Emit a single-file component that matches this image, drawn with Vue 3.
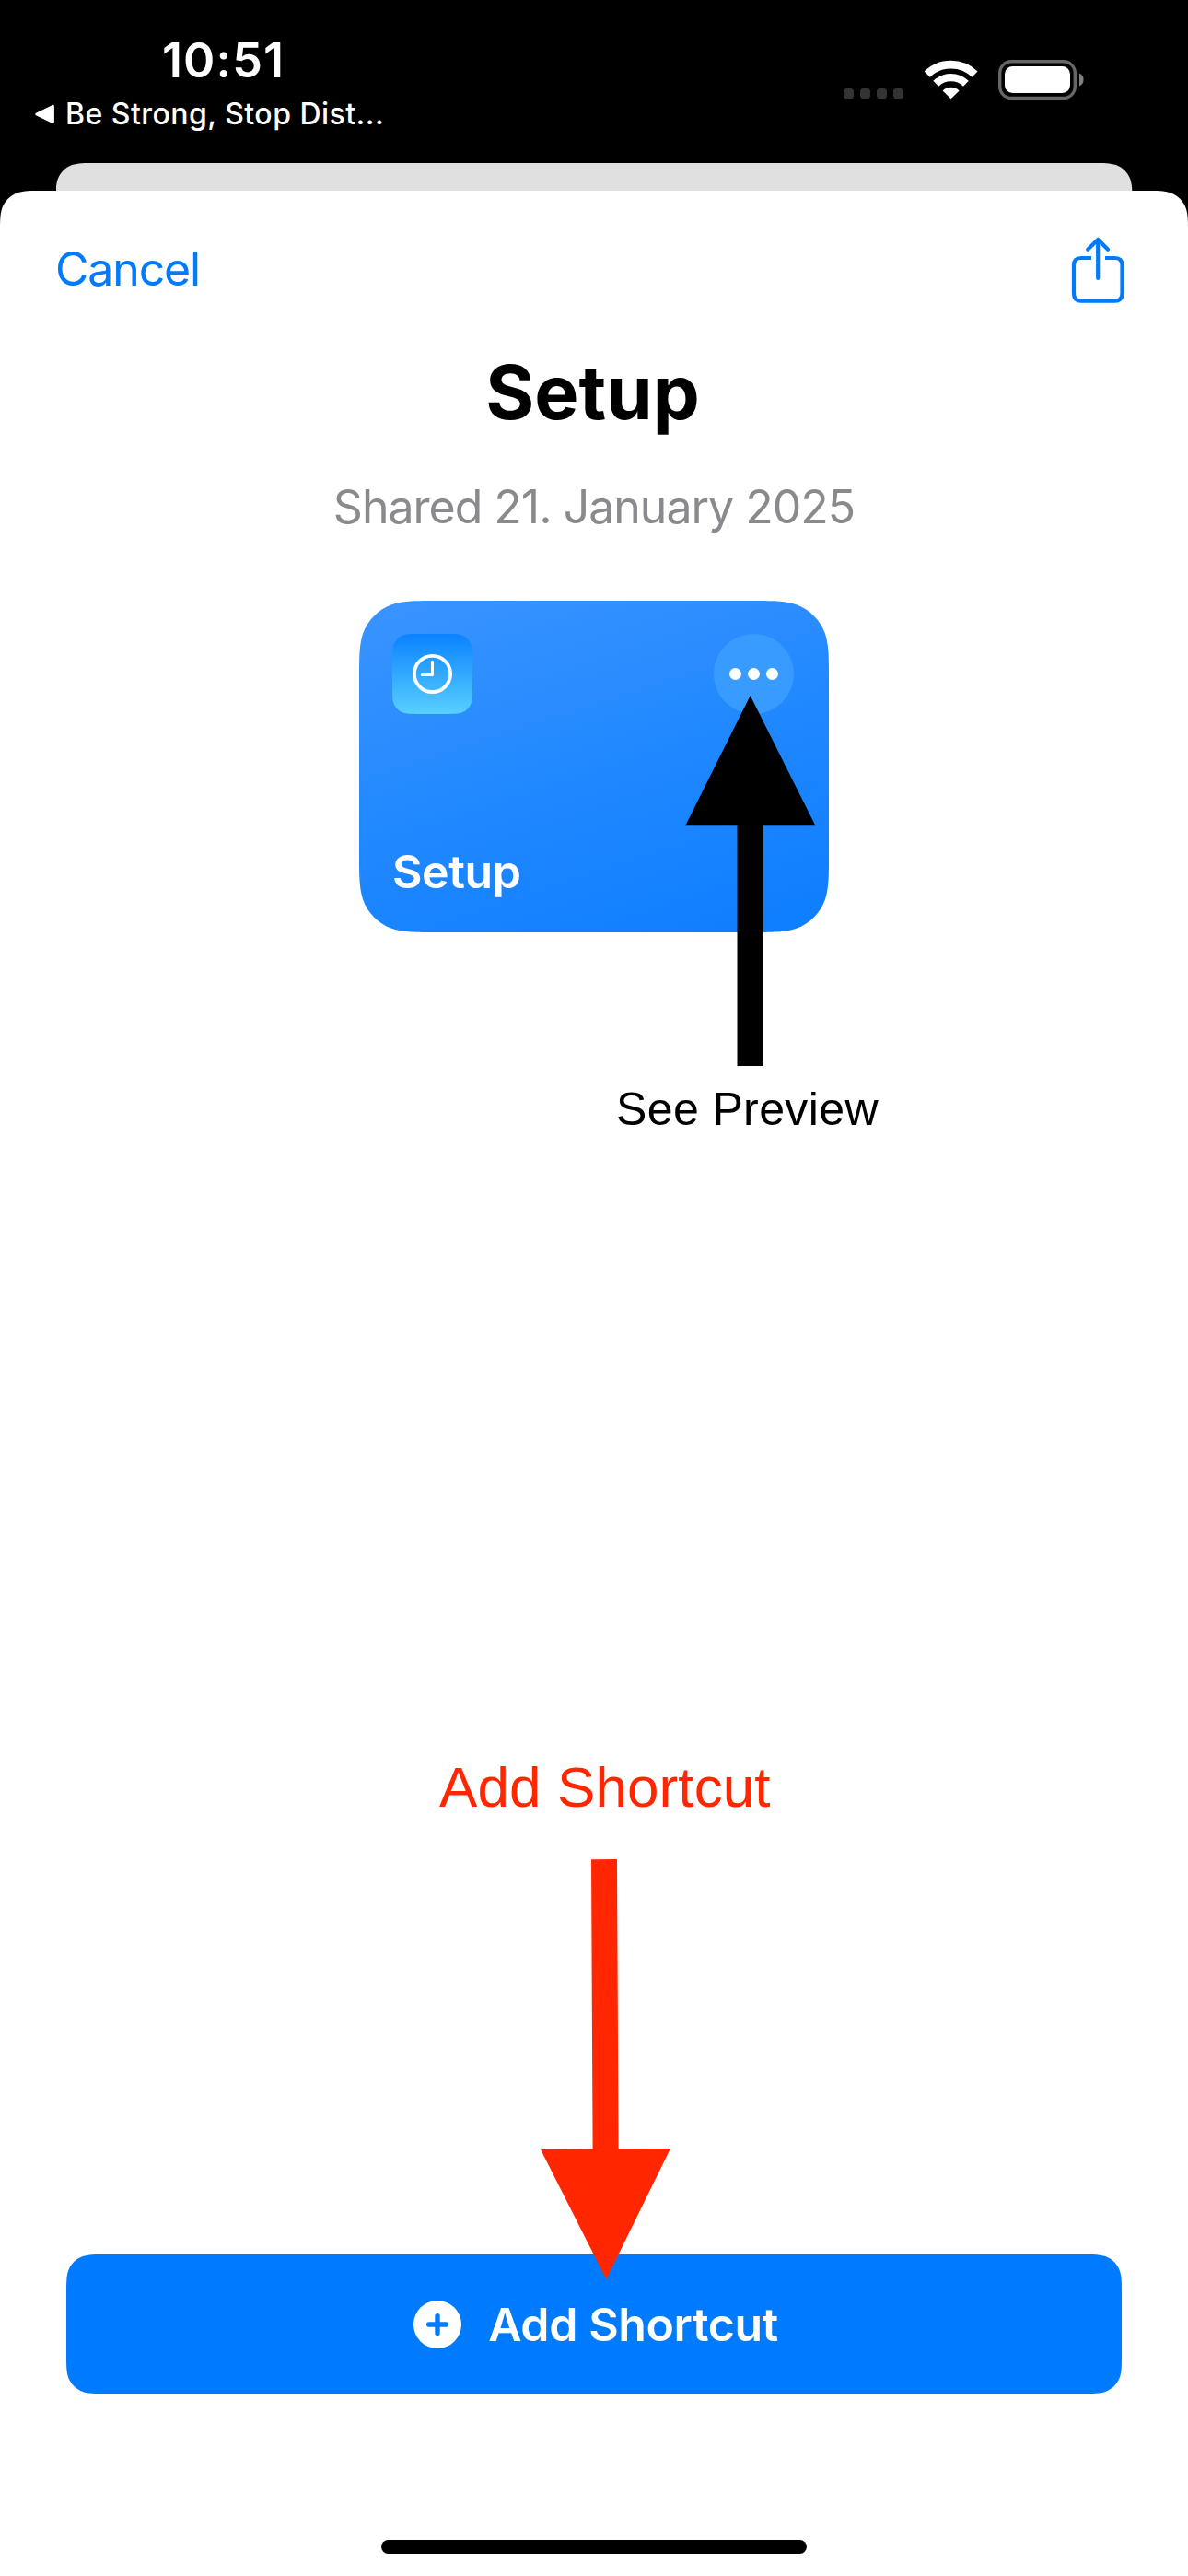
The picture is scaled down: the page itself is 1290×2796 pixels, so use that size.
<script setup>
// Continuous-curvature rounded rectangle, as used by iOS surfaces.
function smoothRect(w, h, r, roundBottom = true) {
  const a = 1.52866 * r
  const b = 1.08849 * r
  const c = 0.86841 * r
  const d = 0.63149 * r
  const e = 0.07491 * r
  const f = 0.37282 * r
  const g = 0.16906 * r
  const top =
    `M${a} 0 L${w - a} 0 C${w - b} 0 ${w - c} 0 ${w - d} ${e} C${w - f} ${g} ${w - g} ${f} ${w - e} ${d} C${w} ${c} ${w} ${b} ${w} ${a} `
  const bottom = roundBottom
    ? `L${w} ${h - a} C${w} ${h - b} ${w} ${h - c} ${w - e} ${h - d} C${w - g} ${h - f} ${w - f} ${h - g} ${w - d} ${h - e} C${w - c} ${h} ${w - b} ${h} ${w - a} ${h} ` +
      `L${a} ${h} C${b} ${h} ${c} ${h} ${d} ${h - e} C${f} ${h - g} ${g} ${h - f} ${e} ${h - d} C0 ${h - c} 0 ${h - b} 0 ${h - a} `
    : `L${w} ${h} L0 ${h} `
  const close = `L0 ${a} C0 ${b} 0 ${c} ${e} ${d} C${g} ${f} ${f} ${g} ${d} ${e} C${c} 0 ${b} 0 ${a} 0 Z`
  return { clipPath: `path("${top}${bottom}${close}")` }
}

const backSheetShape = smoothRect(1169, 80, 28, false)
const sheetShape = smoothRect(1290, 2589, 30, false)
const cardShape = smoothRect(510, 360, 56)
const tileShape = smoothRect(87, 87, 18.5)
const buttonShape = smoothRect(1146, 151, 28)
</script>

<template>
  <main class="phone">
    <header class="status">
      <div class="status-left">
        <div class="time">10:51</div>
        <div class="back">
          <svg class="back-arrow" width="22" height="22" viewBox="0 0 22 22">
            <path d="M1.6 11 L19.6 2.2 V19.8 Z" fill="#fff" stroke="#fff" stroke-width="2.6" stroke-linejoin="round" />
          </svg>
          <span>Be Strong, Stop Dist...</span>
        </div>
      </div>
      <svg class="indicators" width="270" height="50" viewBox="912 61 270 50">
        <g fill="#333">
          <rect x="916" y="96" width="11" height="11" rx="3.6" />
          <rect x="934" y="96" width="11" height="11" rx="3.6" />
          <rect x="952" y="96" width="11" height="11" rx="3.6" />
          <rect x="970" y="96" width="11" height="11" rx="3.6" />
        </g>
        <g fill="none" stroke="#fff">
          <path d="M1006.7 80.6 A37.2 37.2 0 0 1 1058.5 80.6" stroke-width="8.8" />
          <path d="M1016.3 90.8 A23.2 23.2 0 0 1 1048.9 90.8" stroke-width="8.4" />
        </g>
        <path d="M1032.6 107.2 L1023.6 98.4 A13.2 13.2 0 0 1 1041.6 98.4 Z" fill="#fff" />
        <rect x="1085.7" y="66.7" width="81.6" height="39.8" rx="12.5" fill="none" stroke="#666" stroke-width="3.4" />
        <rect x="1091" y="72" width="71" height="29" rx="8.5" fill="#fff" />
        <path d="M1172 79.6 A7.5 7.5 0 0 1 1172 93.4 Z" fill="#808080" />
      </svg>
    </header>

    <div class="back-sheet" :style="backSheetShape"></div>

    <section class="sheet" :style="sheetShape">
      <nav class="nav">
        <span class="cancel">Cancel</span>
        <svg class="share" width="60" height="76" viewBox="1162 256 60 76">
          <g fill="none" stroke="#007aff" stroke-width="4.2">
            <path d="M1185 280 H1174 Q1166 280 1166 288 V318.5 Q1166 326.7 1174 326.7 H1210.5 Q1218.5 326.7 1218.5 318.5 V288 Q1218.5 280 1210.5 280 H1200" />
            <path d="M1192.2 260 V302 M1181.2 270.8 L1192.2 260 L1203 270.8" stroke-linecap="round" stroke-linejoin="round" />
          </g>
        </svg>
      </nav>

      <h1 class="title">Setup</h1>
      <p class="shared">Shared 21. January 2025</p>

      <article class="card" :style="cardShape">
        <div class="card-top">
          <div class="tile" :style="tileShape">
            <svg width="87" height="87" viewBox="0 0 87 87" fill="none" stroke="#fff">
              <circle cx="43.5" cy="43.5" r="19.6" stroke-width="3.8" />
              <path d="M43.5 30.3 V44.4 H32.3" stroke-width="3" stroke-linecap="round" stroke-linejoin="round" />
            </svg>
          </div>
          <div class="more">
            <i></i><i></i><i></i>
          </div>
        </div>
        <div class="card-name">Setup</div>
      </article>

      <div class="add" :style="buttonShape">
        <svg width="52" height="52" viewBox="0 0 52 52">
          <circle cx="26" cy="26" r="26" fill="#fff" />
          <path d="M26 16.6 V35.4 M16.6 26 H35.4" stroke="#007aff" stroke-width="5.4" stroke-linecap="round" />
        </svg>
        <span>Add Shortcut</span>
      </div>

      <div class="home"></div>
    </section>

    <svg class="notes" width="1290" height="2796" viewBox="0 0 1290 2796">
      <path d="M814.7 755 L885.5 896.2 H829 V1157 H800.5 V896.2 H744.2 Z" fill="#000" />
      <path d="M642 2018.2 L670 2018 L671.6 2332.2 L728 2332 L658.3 2474 L587 2333 L643.6 2332.6 Z" fill="#ff2600" />
    </svg>
    <div class="note preview">See Preview</div>
    <div class="note shortcut">Add Shortcut</div>
  </main>
</template>

<style>
body {
  background: #000;
}
</style>

<style scoped>
.phone {
  position: relative;
  display: flex;
  flex-direction: column;
  width: 1290px;
  height: 2796px;
  overflow: hidden;
  background: #000;
  font-family: Inter, "Liberation Sans", sans-serif;
}

.status {
  display: flex;
  justify-content: space-between;
  align-items: flex-start;
  height: 141px;
  padding: 36px 108px 0 38px;
  color: #fff;
}

.time {
  padding-left: 138px;
  font-size: 52px;
  font-weight: 600;
  line-height: 60px;
  letter-spacing: 1.1px;
}

.back {
  display: flex;
  align-items: center;
  gap: 11px;
  margin-top: 8px;
  font-size: 32px;
  font-weight: 500;
  line-height: 40px;
  letter-spacing: 0.47px;
}

.indicators {
  margin-top: 25px;
}

.back-sheet {
  flex: none;
  align-self: center;
  width: 1169px;
  height: 80px;
  margin-bottom: -50px;
  background: #e0e0e0;
}

.sheet {
  display: flex;
  flex: 1;
  flex-direction: column;
  align-items: center;
  padding-bottom: 24px;
  background: #fff;
}

.nav {
  display: flex;
  align-self: stretch;
  align-items: center;
  justify-content: space-between;
  height: 72px;
  margin-top: 49px;
  padding: 0 68px 0 60px;
}

.cancel {
  color: #007aff;
  font-size: 50px;
  line-height: 60px;
  letter-spacing: -1.15px;
}

.share {
  align-self: flex-start;
}

.title {
  margin: 48px 3px 0 0;
  font-size: 81px;
  font-weight: 700;
  line-height: 100px;
  letter-spacing: 0;
}

.shared {
  margin: 44px 0 72px;
  color: #8a8a8e;
  font-size: 50px;
  line-height: 60px;
  letter-spacing: -1px;
}

.card {
  display: flex;
  flex-direction: column;
  justify-content: space-between;
  box-sizing: border-box;
  width: 510px;
  height: 360px;
  padding: 36px;
  background: linear-gradient(162deg, #3a94ff 0%, #2088ff 52%, #107fff 92%);
}

.card-top {
  display: flex;
  justify-content: space-between;
  margin-right: 2px;
}

.tile {
  width: 87px;
  height: 87px;
  background: linear-gradient(#0a82ff, #58d0ff);
}

.tile svg {
  display: block;
}

.more {
  display: flex;
  align-items: center;
  justify-content: center;
  gap: 7.4px;
  width: 87px;
  height: 87px;
  border-radius: 50%;
  background: #389bff;
}

.more i {
  width: 13px;
  height: 13px;
  border-radius: 50%;
  background: #fff;
}

.card-name {
  color: #fff;
  font-size: 50px;
  font-weight: 600;
  line-height: 60px;
  letter-spacing: -0.4px;
}

.add {
  display: flex;
  align-items: center;
  justify-content: center;
  gap: 29px;
  box-sizing: border-box;
  width: 1146px;
  height: 151px;
  margin-top: auto;
  padding-left: 4px;
  background: #007aff;
  color: #fff;
  font-size: 50px;
  font-weight: 600;
  line-height: 60px;
  letter-spacing: -0.4px;
}

.home {
  width: 462px;
  height: 15px;
  margin-top: 159px;
  border-radius: 8px;
  background: #000;
}

/* Annotations drawn over the screen */
.notes {
  position: absolute;
  top: 0;
  left: 0;
}

.note {
  position: absolute;
  font-family: "Liberation Sans", Arial, sans-serif;
  white-space: nowrap;
}

.preview {
  top: 1174px;
  left: 669px;
  color: #000;
  font-size: 50px;
  line-height: 60px;
  letter-spacing: 0.38px;
}

.shortcut {
  top: 1905px;
  left: 477px;
  color: #ff2600;
  font-size: 62px;
  line-height: 70px;
  letter-spacing: 0.1px;
}
</style>
